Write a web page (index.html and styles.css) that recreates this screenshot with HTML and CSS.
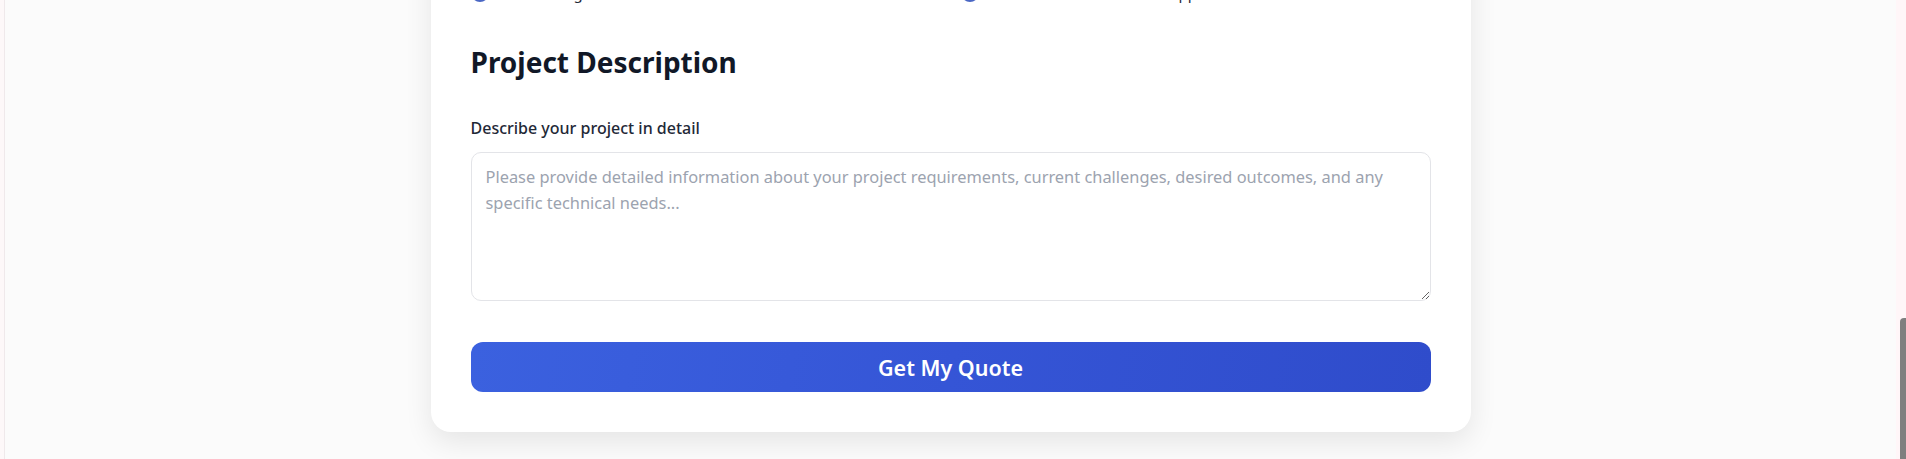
FILE: index.html
```html
<!DOCTYPE html>
<html lang="en">
<head>
<meta charset="utf-8">
<title>Project Description</title>
<link rel="stylesheet" href="styles.css">
</head>
<body>
<div class="frame">
  <div class="edge"></div>
  <main class="main">
    <form class="card">
      <div class="options">
        <label class="option"><span class="dot"></span><span class="opt-text">Cloud Integration</span></label>
        <label class="option"><span class="dot"></span><span class="opt-text">Website Maintenance &amp; Support</span></label>
      </div>
      <h2 class="title">Project Description</h2>
      <label class="field-label" for="desc">Describe your project in detail</label>
      <textarea id="desc" class="textarea" placeholder="Please provide detailed information about your project requirements, current challenges, desired outcomes, and any specific technical needs..."></textarea>
      <button type="button" class="submit">Get My Quote</button>
    </form>
  </main>
  <div class="scrollbar"><div class="thumb"></div></div>
</div>
</body>
</html>
```

FILE: styles.css
```css
* { box-sizing: border-box; }

html, body {
  margin: 0;
  padding: 0;
  height: 100%;
  overflow: hidden;
}

body {
  font-family: "Noto Sans", "Open Sans", sans-serif;
  background: #fbfbfb;
  color: #111827;
}

.frame {
  display: flex;
  height: 459px;
}

.edge {
  width: 5px;
  flex: none;
  background: #fdf8f9;
  border-right: 1px solid #efe9eb;
}

.main {
  flex: 1;
  display: flex;
  justify-content: center;
  align-items: flex-start;
  background: #fbfbfb;
}

.card {
  width: 1040px;
  margin-top: -59px;
  padding: 40px;
  background: #ffffff;
  border-radius: 20px;
  box-shadow: 0 10px 28px rgba(0, 0, 0, 0.09);
  display: flex;
  flex-direction: column;
}

.options {
  display: grid;
  grid-template-columns: 1fr 1fr;
  column-gap: 20px;
  margin-bottom: 41px;
}

.option {
  display: flex;
  align-items: center;
  gap: 12px;
  height: 24px;
  font-size: 15px;
  color: #1f2937;
}

.dot {
  width: 18px;
  height: 18px;
  border-radius: 50%;
  border: 2px solid #4a67c4;
  background: #eef2ff;
  flex: none;
}

.title {
  margin: 0 0 38px;
  font-size: 28px;
  line-height: 32px;
  font-weight: 700;
  color: #111827;
}

.field-label {
  display: block;
  font-size: 16px;
  line-height: 24px;
  font-weight: 500;
  color: #1f2937;
  margin-bottom: 12px;
}

.textarea {
  display: block;
  width: 100%;
  height: 149px;
  padding: 11px 14px;
  border: 1px solid #e3e4e8;
  border-radius: 10px;
  background: #ffffff;
  font-family: inherit;
  font-size: 16.4px;
  line-height: 25.5px;
  color: #111827;
  resize: vertical;
  outline: none;
}

.textarea::placeholder {
  color: #9ca3af;
}

.submit {
  margin-top: 41px;
  height: 50px;
  border: none;
  border-radius: 12px;
  background: linear-gradient(100deg, #3b61df 0%, #3555d6 50%, #2f4ccb 100%);
  color: #ffffff;
  font-family: inherit;
  font-size: 21.5px;
  font-weight: 600;
  cursor: pointer;
}

.scrollbar {
  width: 10px;
  flex: none;
  background: #fff6f8;
  display: flex;
  flex-direction: column;
  justify-content: flex-end;
  align-items: flex-end;
}

.thumb {
  width: 6px;
  height: 141px;
  background: #7f7f7f;
  border-radius: 4px 0 0 0;
}
```
